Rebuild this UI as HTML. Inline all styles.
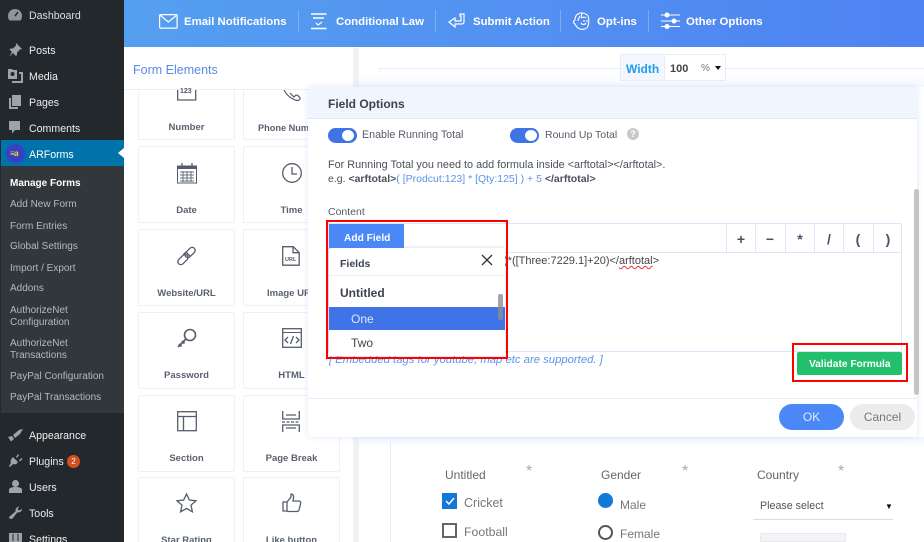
<!DOCTYPE html>
<html><head><meta charset="utf-8"><style>
html,body{margin:0;padding:0;width:924px;height:542px;overflow:hidden;background:#fff}
body{position:relative;font-family:"Liberation Sans",sans-serif}
.a,.t{position:absolute}
.t{white-space:nowrap;line-height:14px}
.m{left:29px;font-size:10.600px;color:#eee;margin-top:-6px}
.s{left:10px;font-size:10px;color:#b4b9be;margin-top:-6px}
.h{color:#fff;font-weight:bold;font-size:11.400px;top:15px}
.sep{position:absolute;top:10px;width:1px;height:22px;background:rgba(255,255,255,.25)}
.c{position:absolute;background:#fff;border:1px solid #eef0f4;width:95px;height:75px;box-sizing:content-box;border-radius:2px}
.l{position:absolute;font-size:9.500px;font-weight:bold;color:#5a6172;text-align:center;white-space:nowrap;line-height:12px;margin-top:1px}
svg{position:absolute;overflow:visible}
.o{position:absolute;top:224px;height:28px;width:28px;border-left:1px solid #dfe8fa;text-align:center;font-size:14px;font-weight:bold;color:#4a5160;line-height:30px}
</style></head><body>

<!-- Sidebar -->
<div class="a" style="left:0;top:0;width:124px;height:542px;background:#23282d"></div>
<div class="a" style="left:1px;top:140px;width:123px;height:26px;background:#0073aa"></div>
<div class="a" style="left:1px;top:166px;width:123px;height:247px;background:#32373c"></div>
<div class="a" style="left:118px;top:148px;border:5px solid transparent;border-right:6px solid #fff;border-left:0"></div>

<svg style="left:8px;top:9px" width="14" height="12"><path d="M7 0a7 7 0 0 0-7 7c0 2 .6 3.500 1.500 4.500h11C13.400 10.500 14 9 14 7a7 7 0 0 0-7-7z" fill="#8f9498"/><path d="M7 7l3-4" stroke="#23282d" stroke-width="1.500"/></svg>
<svg style="left:8px;top:43px" width="14" height="14"><path d="M8 0l6 6-2 .5-3 3 0 2.500-1 1-3-3-4 4 3-5-2.500-2.500 1-1h2.500l3-3z" fill="#9ea3a8"/></svg>
<svg style="left:8px;top:69px" width="15" height="14"><path d="M0 0h4l1 1h4v9H0z" fill="#9ea3a8"/><circle cx="4.500" cy="5" r="2" fill="#23282d"/><path d="M11 3h4v11H4v-2h9V5h-2z" fill="#9ea3a8"/></svg>
<svg style="left:9px;top:95px" width="13" height="14"><path d="M3 0h9v11H3z" fill="#9ea3a8"/><path d="M0 3h2v9h7v2H0z" fill="#9ea3a8"/></svg>
<svg style="left:9px;top:121px" width="13" height="14"><path d="M0 0h11v9H6l-3 3.500V9H0z" fill="#9ea3a8"/></svg>
<div class="a" style="left:6px;top:144px;width:19px;height:19px;border-radius:50%;background:#3b3fc4"></div>
<div class="t" style="left:10px;top:147px;font-size:8px;font-weight:bold;font-style:italic;color:#f2e12a;letter-spacing:-.5px">≡a</div>
<svg style="left:8px;top:428px" width="15" height="14"><path d="M0 9l4-1 2 3-3 2.500zM5 7l6-5 4-1-3 5-5 4z" fill="#9ea3a8"/></svg>
<svg style="left:9px;top:454px" width="13" height="14"><path d="M4 3l5 5c-1 2-3 3-5 2l-3 3-1-1 2-3C1 7 2 5 4 3zM7 3l2-3 1 1-2 3zM10 6l3-2 .5 1-2.500 2.500z" fill="#9ea3a8"/></svg>
<svg style="left:9px;top:480px" width="13" height="14"><circle cx="6.500" cy="3.500" r="3.500" fill="#9ea3a8"/><path d="M0 13V9.500C0 8 3 7 6.500 7S13 8 13 9.500V13z" fill="#9ea3a8"/></svg>
<svg style="left:9px;top:506px" width="13" height="14"><path d="M13 3c0 2.500-2.500 4-4.500 3.300L3 13l-2.500-.5L0 11l6.500-5.500C6 3 8 .5 10.500.5L8.500 3l1.500 1.500z" fill="#9ea3a8"/></svg>
<svg style="left:9px;top:533px" width="13" height="9"><path d="M0 0h13v9H0z" fill="#9ea3a8"/><path d="M4 1v7M9 1v7" stroke="#23282d"/></svg>

<div class="t m" style="top:15px;color:#ddd">Dashboard</div>
<div class="t m" style="top:50px">Posts</div>
<div class="t m" style="top:76px">Media</div>
<div class="t m" style="top:102px">Pages</div>
<div class="t m" style="top:128px">Comments</div>
<div class="t m" style="top:154px;color:#fff">ARForms</div>
<div class="t s" style="top:183px;color:#fff;font-weight:bold">Manage Forms</div>
<div class="t s" style="top:204px">Add New Form</div>
<div class="t s" style="top:226px">Form Entries</div>
<div class="t s" style="top:246px">Global Settings</div>
<div class="t s" style="top:268px">Import / Export</div>
<div class="t s" style="top:288px">Addons</div>
<div class="t s" style="top:310px">AuthorizeNet</div>
<div class="t s" style="top:322px">Configuration</div>
<div class="t s" style="top:343px">AuthorizeNet</div>
<div class="t s" style="top:355px">Transactions</div>
<div class="t s" style="top:376px">PayPal Configuration</div>
<div class="t s" style="top:397px">PayPal Transactions</div>
<div class="t m" style="top:435px">Appearance</div>
<div class="t m" style="top:461px">Plugins</div>
<div class="a" style="left:67px;top:455px;width:13px;height:13px;border-radius:50%;background:#d54e21;color:#fff;font-size:8px;text-align:center;line-height:13px">2</div>
<div class="t m" style="top:487px">Users</div>
<div class="t m" style="top:513px">Tools</div>
<div class="t m" style="top:539px">Settings</div>

<!-- Header -->
<div class="a" style="left:124px;top:0;width:800px;height:47px;background:linear-gradient(90deg,#559ff0,#4f82f2)"></div>
<svg style="left:159px;top:14px" width="19" height="15" fill="none" stroke="#fff" stroke-width="1.200"><rect x=".6" y=".6" width="17.500" height="13.500" rx="1"/><path d="M1 1l8.300 7L18 1"/></svg>
<div class="t h" style="left:184px">Email Notifications</div>
<div class="sep" style="left:298px"></div>
<svg style="left:310px;top:13px" width="18" height="17" fill="none" stroke="#fff" stroke-width="1.200"><path d="M1 1h15.500M3 5h11M1 15.500h15.500" stroke-width="1.400"/><path d="M6 10l2 2 4-3"/></svg>
<div class="t h" style="left:336px">Conditional Law</div>
<div class="sep" style="left:435px"></div>
<svg style="left:448px;top:13px" width="17" height="15" fill="none" stroke="#fff" stroke-width="1.200"><path d="M12 1h4v8c0 1-1 2-2 2H7v3L1 9l6-4v3h6V3h-1z"/></svg>
<div class="t h" style="left:473px">Submit Action</div>
<div class="sep" style="left:560px"></div>
<svg style="left:573px;top:12px" width="17" height="19" fill="none" stroke="#fff" stroke-width="1.100"><path d="M5 2c3-2 8-1 10 2 1 3 1 7 0 10-1 3-5 4-8 3-3-1-4-3-5-5-2-1-2-3 0-4 0-3 1-5 3-6zM8 6c2-1 4-1 5 0M8 11c1 2 4 2 5 0M7 4c-1 2-2 3-2 5M11 8v2M14 8v2M9 1c-1 3-1 4 0 5"/></svg>
<div class="t h" style="left:597px">Opt-ins</div>
<div class="sep" style="left:648px"></div>
<svg style="left:661px;top:12px" width="19" height="17" stroke="#fff" fill="#fff" stroke-width="1.100"><path d="M0 3h19M0 9h19M0 14.500h19" fill="none"/><circle cx="6" cy="3" r="2"/><circle cx="13" cy="9" r="2"/><circle cx="6" cy="14.500" r="2"/></svg>
<div class="t h" style="left:686px">Other Options</div>

<!-- Left panel -->
<div class="a" style="left:124px;top:47px;width:229px;height:495px;background:#fff"></div>
<div class="a" style="left:353px;top:48px;width:6px;height:494px;background:#f1f1f2"></div>
<div class="a" style="left:124px;top:89px;width:229px;height:1px;background:#e9effb"></div>
<div class="t" style="left:133px;top:63px;font-size:12.500px;color:#5a8ae8">Form Elements</div>

<!-- Cards -->
<div class="c" style="left:138px;top:90px;height:49px;border-top:0"></div>
<div class="c" style="left:243px;top:90px;height:49px;border-top:0"></div>
<div class="c" style="left:138px;top:146px"></div><div class="c" style="left:243px;top:146px"></div>
<div class="c" style="left:138px;top:229px"></div><div class="c" style="left:243px;top:229px"></div>
<div class="c" style="left:138px;top:312px"></div><div class="c" style="left:243px;top:312px"></div>
<div class="c" style="left:138px;top:395px"></div><div class="c" style="left:243px;top:395px"></div>
<div class="c" style="left:138px;top:477px;height:70px"></div><div class="c" style="left:243px;top:477px;height:70px"></div>

<div class="l" style="left:138px;width:97px;top:121px">Number</div>
<div class="l" style="left:258px;top:121px;font-size:9.200px">Phone Number</div>
<div class="l" style="left:138px;width:97px;top:204px">Date</div>
<div class="l" style="left:243px;width:97px;top:204px">Time</div>
<div class="l" style="left:138px;width:97px;top:287px">Website/URL</div>
<div class="l" style="left:267px;top:287px">Image URL</div>
<div class="l" style="left:138px;width:97px;top:369px">Password</div>
<div class="l" style="left:243px;width:97px;top:369px">HTML</div>
<div class="l" style="left:138px;width:97px;top:452px">Section</div>
<div class="l" style="left:243px;width:97px;top:452px">Page Break</div>
<div class="l" style="left:138px;width:97px;top:534px">Star Rating</div>
<div class="l" style="left:243px;width:97px;top:534px">Like button</div>

<!-- Card icons -->
<svg style="left:177px;top:90px" width="20" height="11" fill="none" stroke="#555c6b" stroke-width="1.300"><path d="M.7 0v10h18V0"/></svg>
<div class="t" style="left:180px;top:85px;font-size:7px;font-weight:bold;color:#555c6b">123</div>
<svg style="left:282px;top:90px" width="20" height="12" fill="none" stroke="#555c6b" stroke-width="1.200"><path d="M2 0c2 4 5 7 9 9 3 2 6 2 7 0 .5-1.500-2-4-4-4l-2 2-4-4"/></svg>
<svg style="left:177px;top:163px" width="20" height="21"><rect x=".5" y="3" width="19" height="17" fill="none" stroke="#555c6b"/><rect x=".5" y="3" width="19" height="3" fill="#555c6b"/><path d="M5 0v4M15 0v4" stroke="#555c6b" stroke-width="1.300"/><path d="M3 9h14M3 12h14M3 15h14M3 18h14M6 8v11M10 8v11M14 8v11" stroke="#6a7080" stroke-width="1"/></svg>
<svg style="left:282px;top:163px" width="20" height="20" fill="none" stroke="#555c6b" stroke-width="1.300"><circle cx="10" cy="10" r="9.300"/><path d="M10 4v7h5"/></svg>
<svg style="left:176px;top:246px" width="21" height="20" fill="none" stroke="#555c6b" stroke-width="1.300"><g transform="rotate(-45 10.500 10)"><rect x="-.5" y="7" width="12" height="6" rx="3"/><rect x="9.500" y="7" width="12" height="6" rx="3"/></g><path d="M7 9l3-3 4 4"/></svg>
<svg style="left:282px;top:246px" width="18" height="20" fill="none" stroke="#555c6b" stroke-width="1.300"><path d="M.7.7h10.500l6 6v12.500H.7zM11 .7v6h6"/></svg>
<div class="t" style="left:285px;top:253px;font-size:5.500px;font-weight:bold;color:#555c6b">URL</div>
<svg style="left:177px;top:328px" width="20" height="21" fill="none" stroke="#555c6b" stroke-width="1.600"><circle cx="13" cy="7" r="5.500"/><path d="M9 11L1 19M2 16l2.500 2.500M5 13l2.500 2.500" stroke-width="1.800"/></svg>
<svg style="left:282px;top:328px" width="20" height="20" fill="none" stroke="#555c6b" stroke-width="1.300"><rect x=".7" y=".7" width="18.600" height="18.600"/><path d="M1 4.500h18" stroke-width="1"/><path d="M6 9l-3 3 3 3M14 9l3 3-3 3M11.500 8l-3 8"/></svg>
<svg style="left:177px;top:411px" width="20" height="21" fill="none" stroke="#555c6b" stroke-width="1.300"><rect x=".7" y=".7" width="18.600" height="19"/><path d="M1 5.500h18M6.500 5.500V20"/></svg>
<svg style="left:282px;top:411px" width="18" height="21" fill="none" stroke="#555c6b" stroke-width="1.300"><path d="M.7 0v8h16.600V0M.7 21v-7h16.600v7M4 4h10M4 17h10"/><path d="M0 11h18" stroke-dasharray="3 1.500"/></svg>
<svg style="left:176px;top:493px" width="21" height="20" fill="none" stroke="#555c6b" stroke-width="1.300"><path d="M10.500 1l2.800 6 6.700.7-5 4.500 1.400 6.600-5.900-3.400-5.900 3.400 1.400-6.600-5-4.500 6.700-.7z"/></svg>
<svg style="left:282px;top:493px" width="20" height="20" fill="none" stroke="#555c6b" stroke-width="1.300"><path d="M1 9h4v9H1zM5 9l4-5V1c2 0 3 2 2.500 4L11 8h6c1.500 0 2 1.500 1.500 3l-1.500 6c-.3 1-1 1.500-2 1.500H5"/></svg>

<!-- Canvas -->
<div class="a" style="left:380px;top:68px;width:544px;height:1px;background:#e6ecfa"></div>
<div class="a" style="left:379px;top:68px;width:1px;height:20px;background:#e6ecfa"></div>
<div class="a" style="left:359px;top:72px;width:565px;height:15px;background:linear-gradient(#fff,#f4f8fe)"></div>
<div class="a" style="left:359px;top:437px;width:565px;height:11px;background:linear-gradient(#f1f6fe,#fff)"></div>
<div class="a" style="left:390px;top:442px;width:1px;height:100px;background:#e6ecfa"></div>
<div class="a" style="left:620px;top:54px;width:106px;height:27px;background:#fff;border:1px solid #e6ecfa;box-sizing:border-box"></div>
<div class="a" style="left:621px;top:55px;width:43px;height:25px;background:#f3f6fd;border-right:1px solid #e6ecfa"></div>
<div class="t" style="left:626px;top:62px;font-size:12px;font-weight:bold;color:#1f9de8">Width</div>
<div class="t" style="left:670px;top:62px;font-size:11px;font-weight:bold;color:#444">100</div>
<div class="t" style="left:701px;top:62px;font-size:10px;color:#777">%</div>
<div class="a" style="left:715px;top:66px;border:3.500px solid transparent;border-top:4px solid #111;border-bottom:0"></div>

<!-- Modal -->
<div class="a" style="left:308px;top:87px;width:609px;height:350px;background:#fff;box-shadow:0 0 6px rgba(120,160,240,.25);border-radius:3px"></div>
<div class="a" style="left:308px;top:87px;width:609px;height:32px;background:#f1f5fe;border-bottom:1px solid #dfe8fa;box-sizing:border-box"></div>
<div class="t" style="left:328px;top:97px;font-size:12px;font-weight:bold;color:#3c4350">Field Options</div>

<div class="a" style="left:328px;top:128px;width:29px;height:15px;border-radius:8px;background:#3f73e6"></div>
<div class="a" style="left:342px;top:130px;width:12px;height:11px;border-radius:50%;background:#fff"></div>
<div class="t" style="left:362px;top:128px;font-size:10.700px;color:#555c68">Enable Running Total</div>
<div class="a" style="left:510px;top:128px;width:29px;height:15px;border-radius:8px;background:#3f73e6"></div>
<div class="a" style="left:525px;top:130px;width:12px;height:11px;border-radius:50%;background:#fff"></div>
<div class="t" style="left:545px;top:128px;font-size:10.500px;color:#555c68">Round Up Total</div>
<div class="a" style="left:627px;top:128px;width:12px;height:12px;border-radius:50%;background:#c9c9c9;color:#fff;font-size:9px;font-weight:bold;text-align:center;line-height:12px">?</div>

<div class="t" style="left:328px;top:158px;font-size:10.850px;color:#4a505c">For Running Total you need to add formula inside &lt;arftotal&gt;&lt;/arftotal&gt;.</div>
<div class="t" style="left:328px;top:172px;font-size:10.500px;color:#4a505c">e.g. <b>&lt;arftotal&gt;</b><span style="color:#5a93ea">( [Prodcut:123] * [Qty:125] ) + 5</span> <b>&lt;/arftotal&gt;</b></div>
<div class="t" style="left:328px;top:205px;font-size:10.500px;color:#555c68">Content</div>

<!-- Editor -->
<div class="a" style="left:328px;top:223px;width:574px;height:129px;border:1px solid #dbe6f9;box-sizing:border-box;border-radius:2px"></div>
<div class="a" style="left:328px;top:252px;width:574px;height:1px;background:#dbe6f9"></div>
<div class="o" style="left:726px">+</div><div class="o" style="left:755px">−</div><div class="o" style="left:785px">*</div><div class="o" style="left:814px">/</div><div class="o" style="left:843px">(</div><div class="o" style="left:873px">)</div>
<div class="t" style="left:504px;top:254px;font-size:11px;color:#444">)*([Three:7229.1]+20)&lt;/<span style="text-decoration:underline wavy #e33;text-decoration-thickness:1px">arftotal</span>&gt;</div>
<div class="a" style="left:329px;top:224px;width:75px;height:28px;background:#4a87f7"></div>
<div class="t" style="left:344px;top:232px;font-size:10.200px;font-weight:bold;color:#fff">Add Field</div>

<div class="t" style="left:329px;top:353px;font-size:11.300px;font-style:italic;color:#5a93ea">[ Embedded tags for youtube, map etc are supported. ]</div>

<div class="a" style="left:329px;top:248px;width:176px;height:108px;background:#fff;box-shadow:0 0 3px rgba(120,140,180,.4);border-radius:2px"></div>
<div class="a" style="left:329px;top:275px;width:176px;height:1px;background:#e8ecf3"></div>
<div class="t" style="left:340px;top:257px;font-size:10.500px;font-weight:bold;color:#3c4350">Fields</div>
<svg style="left:481px;top:254px" width="12" height="12" stroke="#333" stroke-width="1.300"><path d="M1 1l10 10M11 1L1 11"/></svg>
<div class="t" style="left:340px;top:286px;font-size:12px;font-weight:bold;color:#3c4350">Untitled</div>
<div class="a" style="left:329px;top:307px;width:176px;height:23px;background:#3f73e6"></div>
<div class="t" style="left:351px;top:312px;font-size:12px;color:#dfe8fb">One</div>
<div class="t" style="left:351px;top:336px;font-size:12px;color:#444">Two</div>
<div class="a" style="left:498px;top:294px;width:5px;height:26px;background:#8a8f99;opacity:.8;border-radius:2px"></div>

<!-- Red boxes -->
<div class="a" style="left:326px;top:220px;width:182px;height:139px;border:2px solid #f00;box-sizing:border-box"></div>
<div class="a" style="left:792px;top:343px;width:116px;height:39px;border:2px solid #f00;box-sizing:border-box"></div>

<div class="a" style="left:797px;top:352px;width:105px;height:23px;background:#22c06c;border-radius:2px"></div>
<div class="t" style="left:809px;top:358px;font-size:10.200px;font-weight:bold;color:#fff">Validate Formula</div>
<div class="a" style="left:914px;top:189px;width:5px;height:206px;background:#c4c4c4;border-radius:3px"></div>

<div class="a" style="left:308px;top:398px;width:609px;height:1px;background:#e3eafa"></div>
<div class="a" style="left:779px;top:404px;width:65px;height:26px;border-radius:13px;background:#4a87f7;color:#dfe9fd;font-size:12px;text-align:center;line-height:26px">OK</div>
<div class="a" style="left:850px;top:404px;width:65px;height:26px;border-radius:13px;background:#ececec;color:#777;font-size:12px;text-align:center;line-height:26px">Cancel</div>

<!-- Form preview -->
<div class="t" style="left:445px;top:468px;font-size:12px;color:#666">Untitled</div>
<div class="t" style="left:526px;top:465px;font-size:16px;color:#aaa">*</div>
<div class="t" style="left:601px;top:468px;font-size:12px;color:#666">Gender</div>
<div class="t" style="left:682px;top:465px;font-size:16px;color:#aaa">*</div>
<div class="t" style="left:757px;top:468px;font-size:12px;color:#666">Country</div>
<div class="t" style="left:838px;top:465px;font-size:16px;color:#aaa">*</div>

<div class="a" style="left:442px;top:493px;width:15px;height:16px;background:#1378d6"></div>
<svg style="left:445px;top:497px" width="10" height="8" fill="none" stroke="#fff" stroke-width="1.500"><path d="M1 4l3 3 5-6"/></svg>
<div class="t" style="left:464px;top:496px;font-size:12.500px;color:#777">Cricket</div>
<div class="a" style="left:442px;top:523px;width:15px;height:15px;border:2px solid #666;box-sizing:border-box"></div>
<div class="t" style="left:464px;top:525px;font-size:12.300px;color:#777">Football</div>
<div class="a" style="left:598px;top:493px;width:15px;height:15px;border-radius:50%;background:#1378d6"></div>
<div class="t" style="left:620px;top:498px;font-size:12px;color:#777">Male</div>
<div class="a" style="left:598px;top:525px;width:15px;height:15px;border-radius:50%;border:2px solid #555;box-sizing:border-box"></div>
<div class="t" style="left:620px;top:527px;font-size:12px;color:#777">Female</div>
<div class="t" style="left:760px;top:499px;font-size:10.700px;color:#555">Please select</div>
<div class="t" style="left:885px;top:500px;font-size:8px;color:#111">▼</div>
<div class="a" style="left:753px;top:519px;width:140px;height:1px;background:#ddd"></div>
<div class="a" style="left:760px;top:533px;width:86px;height:9px;background:#f3f4f8;border:1px solid #e8e9ee;box-sizing:border-box"></div>
</body></html>
